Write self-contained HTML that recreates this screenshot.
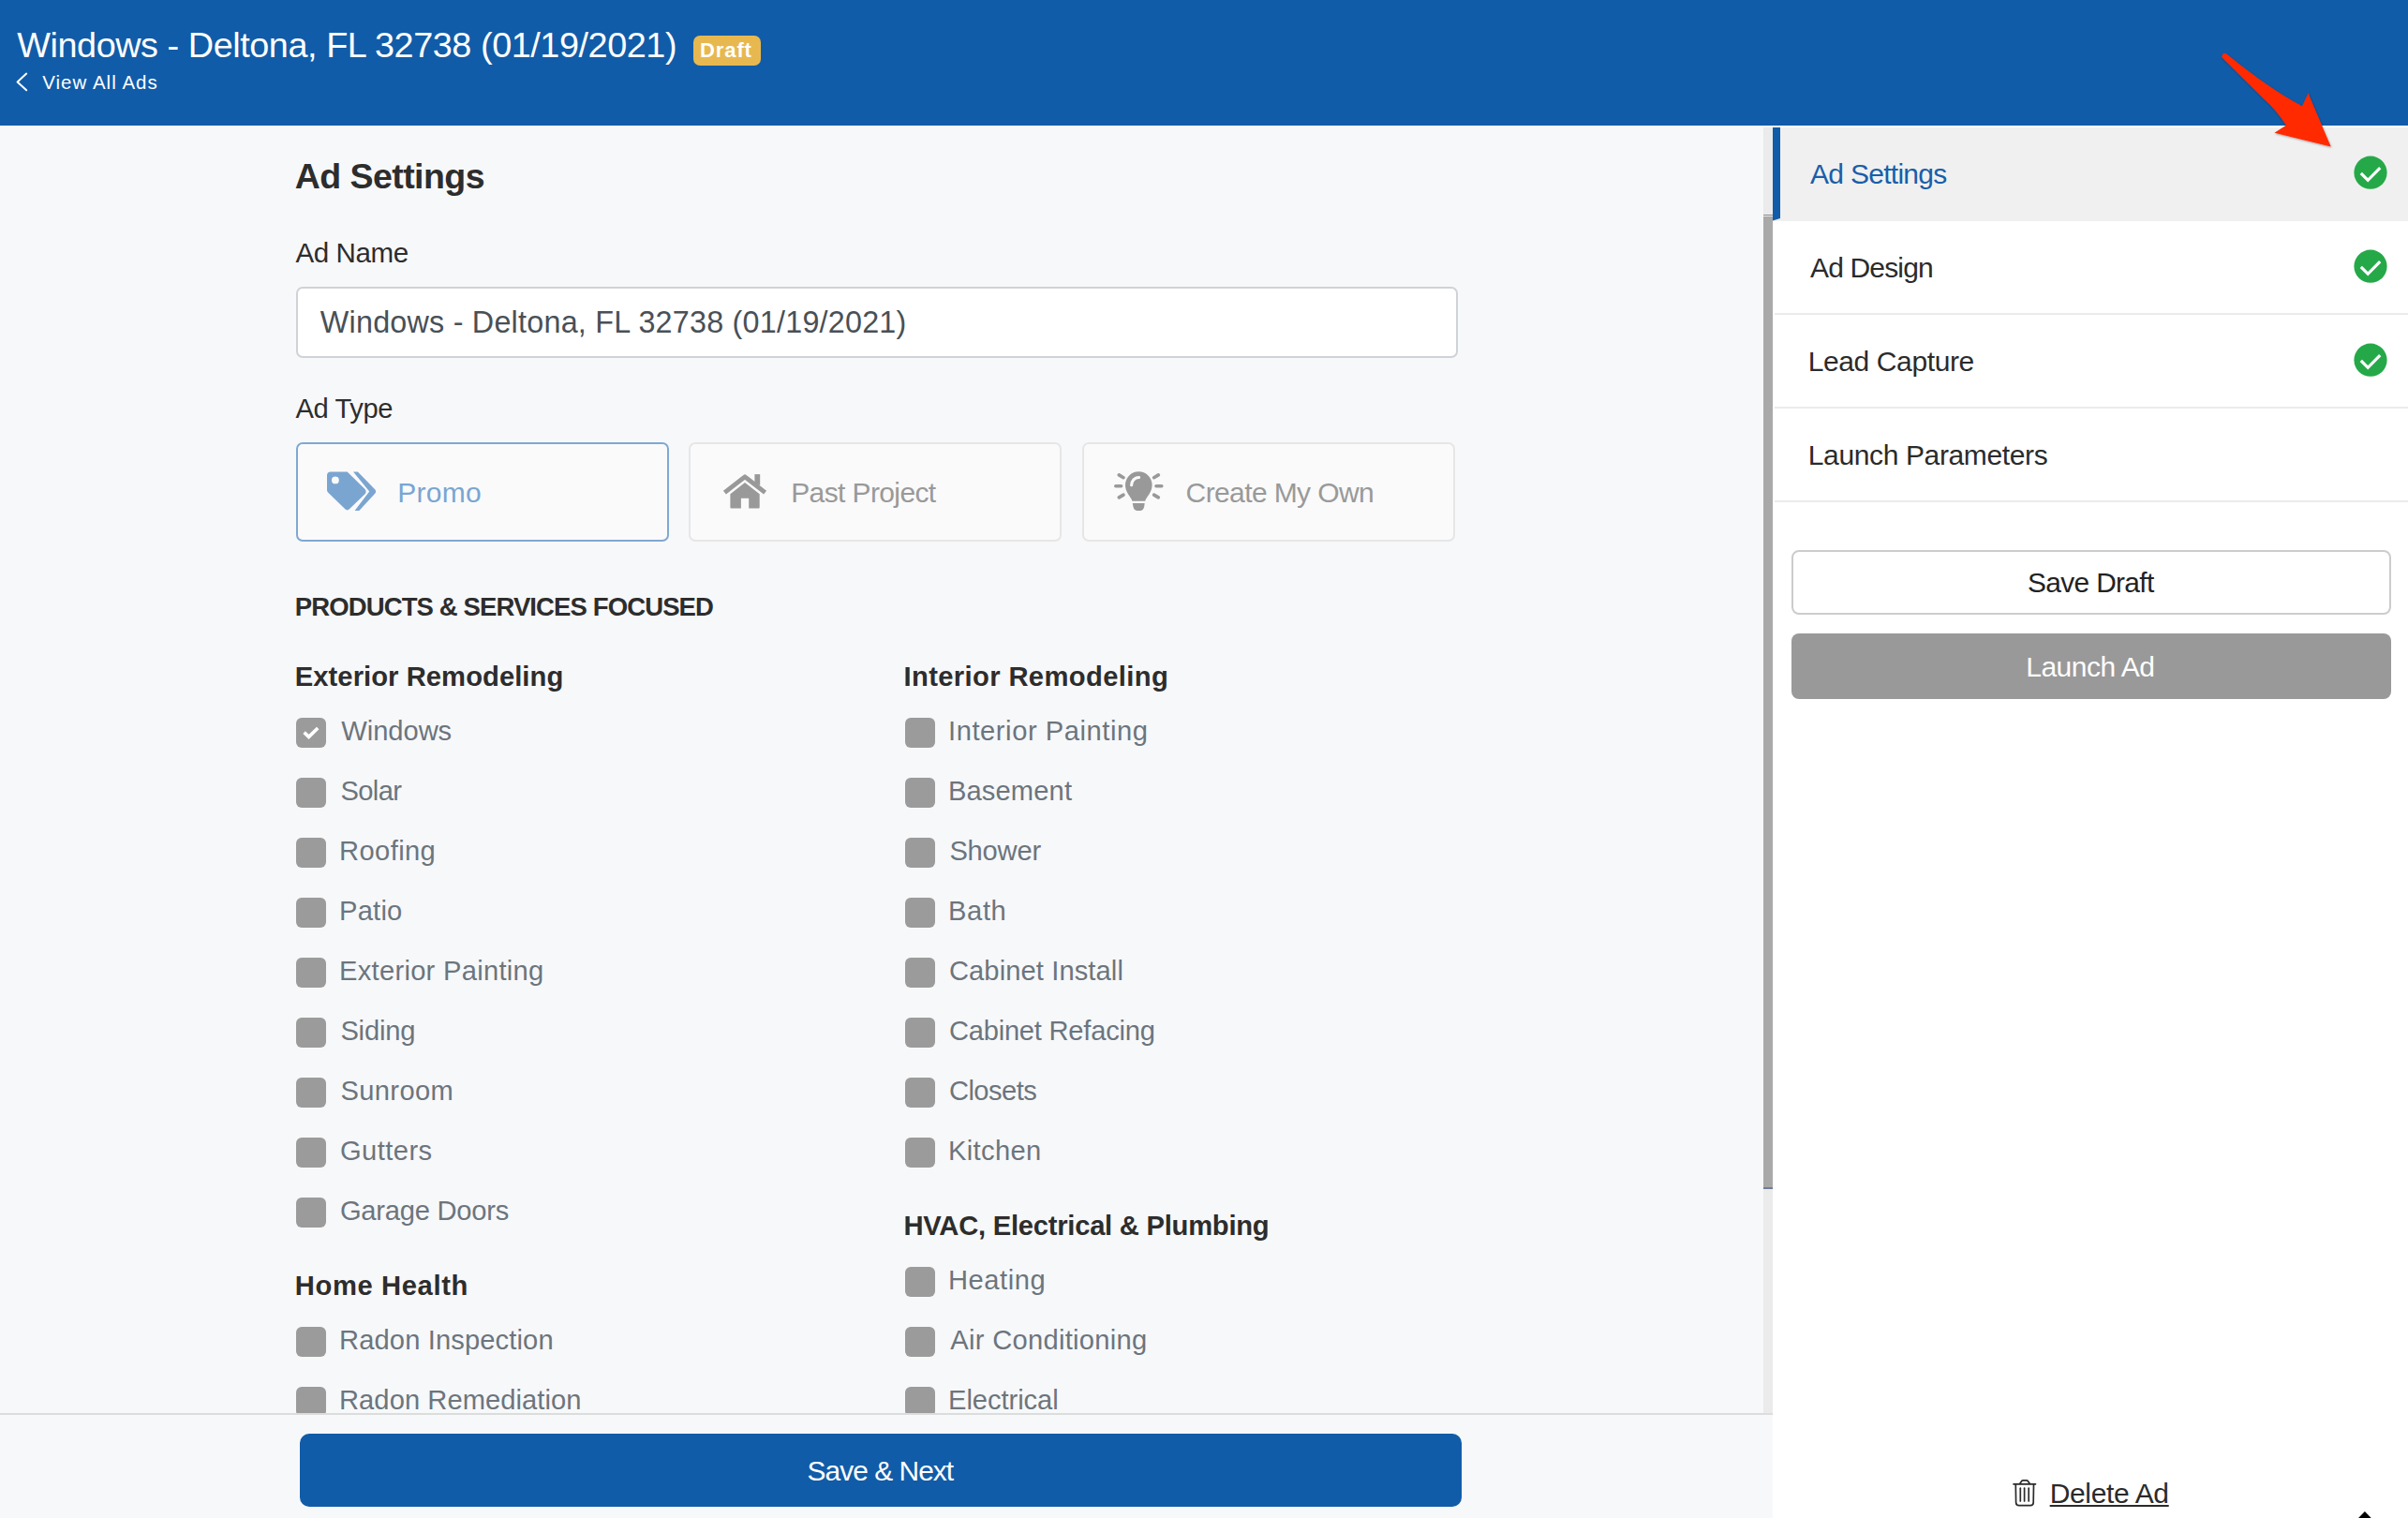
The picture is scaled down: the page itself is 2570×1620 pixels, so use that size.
<!DOCTYPE html>
<html><head><meta charset="utf-8"><title>Ad Settings</title>
<style>
html,body{margin:0;padding:0;}
body{width:2570px;height:1620px;overflow:hidden;background:#f7f8fa;font-family:"Liberation Sans",sans-serif;position:relative;}
.t{position:absolute;white-space:nowrap;font-family:"Liberation Sans",sans-serif;}
.a{position:absolute;box-sizing:border-box;}
.cb{position:absolute;width:32px;height:32px;border-radius:6px;background:#9b9b9b;}
svg{position:absolute;left:0;top:0;}
</style></head><body>
<!-- header -->
<div class="a" style="left:0;top:0;width:2570px;height:134px;background:#115ca8"></div>
<div class="a" style="left:740px;top:38px;width:72px;height:32px;border-radius:7px;background:#e8b850"></div>

<!-- main content -->
<div class="a" style="left:316px;top:306px;width:1240px;height:76px;border:2px solid #cfd3d8;border-radius:7px;background:#fff"></div>
<div class="a" style="left:316px;top:472px;width:398px;height:106px;border:2px solid #80a8d2;border-radius:7px;background:#fafafb"></div>
<div class="a" style="left:735px;top:472px;width:398px;height:106px;border:2px solid #e6e6e6;border-radius:7px;background:#fafafa"></div>
<div class="a" style="left:1155px;top:472px;width:398px;height:106px;border:2px solid #e6e6e6;border-radius:7px;background:#fafafa"></div>
<div class="cb" style="left:316px;top:766px"></div>
<div class="cb" style="left:316px;top:830px"></div>
<div class="cb" style="left:316px;top:894px"></div>
<div class="cb" style="left:316px;top:958px"></div>
<div class="cb" style="left:316px;top:1022px"></div>
<div class="cb" style="left:316px;top:1086px"></div>
<div class="cb" style="left:316px;top:1150px"></div>
<div class="cb" style="left:316px;top:1214px"></div>
<div class="cb" style="left:316px;top:1278px"></div>
<div class="cb" style="left:316px;top:1416px"></div>
<div class="cb" style="left:316px;top:1480px"></div>
<div class="cb" style="left:966px;top:766px"></div>
<div class="cb" style="left:966px;top:830px"></div>
<div class="cb" style="left:966px;top:894px"></div>
<div class="cb" style="left:966px;top:958px"></div>
<div class="cb" style="left:966px;top:1022px"></div>
<div class="cb" style="left:966px;top:1086px"></div>
<div class="cb" style="left:966px;top:1150px"></div>
<div class="cb" style="left:966px;top:1214px"></div>
<div class="cb" style="left:966px;top:1352px"></div>
<div class="cb" style="left:966px;top:1416px"></div>
<div class="cb" style="left:966px;top:1480px"></div>

<!-- scrollbar -->
<div class="a" style="left:1882px;top:136px;width:10px;height:1372px;background:#ebebeb"></div>
<div class="a" style="left:1882px;top:228.5px;width:10px;height:1.5px;background:#8a8a8a"></div>
<div class="a" style="left:1882px;top:230.5px;width:10px;height:1037px;background:#a9a9a9"></div>
<div class="a" style="left:1882px;top:1267px;width:10px;height:1.5px;background:#6f7f95"></div>

<!-- sidebar -->
<div class="a" style="left:1892px;top:134px;width:678px;height:1486px;background:#fff"></div>
<div class="a" style="left:1892px;top:136px;width:678px;height:99.5px;background:#f0f0f0"></div>
<div class="a" style="left:1892px;top:136px;width:8px;height:99.5px;background:#115ca8;clip-path:polygon(0 0,100% 0,100% 97.5%,0 100%)"></div>
<div class="a" style="left:1894px;top:334px;width:676px;height:2px;background:#ebebeb"></div>
<div class="a" style="left:1894px;top:434px;width:676px;height:2px;background:#ebebeb"></div>
<div class="a" style="left:1894px;top:534px;width:676px;height:2px;background:#ebebeb"></div>
<div class="a" style="left:1912px;top:587px;width:640px;height:68.5px;border:2px solid #cccccc;border-radius:8px;background:#fff"></div>
<div class="a" style="left:1912px;top:676px;width:640px;height:70px;border-radius:8px;background:#999999"></div>

<div class="t" style="left:18.30px;top:30.07px;font-size:37.80px;line-height:37.80px;letter-spacing:-0.440px;color:#fff;">Windows - Deltona, FL 32738 (01/19/2021)</div>
<div class="t" style="left:747.12px;top:43.30px;font-size:22.00px;line-height:22.00px;letter-spacing:0.861px;color:#fff;font-weight:700;">Draft</div>
<div class="t" style="left:45.20px;top:78.43px;font-size:20.43px;line-height:20.43px;letter-spacing:1.058px;color:#fff;">View All Ads</div>
<div class="t" style="left:314.81px;top:169.93px;font-size:37.50px;line-height:37.50px;letter-spacing:-0.563px;color:#2d2d2d;font-weight:700;">Ad Settings</div>
<div class="t" style="left:315.40px;top:254.87px;font-size:29.57px;line-height:29.57px;letter-spacing:-0.407px;color:#2d2d2d;">Ad Name</div>
<div class="t" style="left:341.80px;top:328.03px;font-size:32.32px;line-height:32.32px;letter-spacing:0.227px;color:#495057;">Windows - Deltona, FL 32738 (01/19/2021)</div>
<div class="t" style="left:315.40px;top:421.64px;font-size:29.13px;line-height:29.13px;letter-spacing:-0.366px;color:#2d2d2d;">Ad Type</div>
<div class="t" style="left:424.26px;top:510.70px;font-size:30.00px;line-height:30.00px;letter-spacing:0.275px;color:#7ba5d1;">Promo</div>
<div class="t" style="left:844.16px;top:510.70px;font-size:30.00px;line-height:30.00px;letter-spacing:-0.608px;color:#999999;">Past Project</div>
<div class="t" style="left:1265.59px;top:510.70px;font-size:30.00px;line-height:30.00px;letter-spacing:-0.608px;color:#999999;">Create My Own</div>
<div class="t" style="left:314.78px;top:634.33px;font-size:27.50px;line-height:27.50px;letter-spacing:-0.883px;color:#2d2d2d;font-weight:700;">PRODUCTS &amp; SERVICES FOCUSED</div>
<div class="t" style="left:314.78px;top:708.08px;font-size:29.20px;line-height:29.20px;letter-spacing:0.057px;color:#2d2d2d;font-weight:700;">Exterior Remodeling</div>
<div class="t" style="left:364.30px;top:765.64px;font-size:29.13px;line-height:29.13px;letter-spacing:-0.044px;color:#6c757d;">Windows</div>
<div class="t" style="left:363.39px;top:829.64px;font-size:29.13px;line-height:29.13px;letter-spacing:-0.613px;color:#6c757d;">Solar</div>
<div class="t" style="left:362.02px;top:893.64px;font-size:29.13px;line-height:29.13px;letter-spacing:0.401px;color:#6c757d;">Roofing</div>
<div class="t" style="left:362.02px;top:957.64px;font-size:29.13px;line-height:29.13px;letter-spacing:0.215px;color:#6c757d;">Patio</div>
<div class="t" style="left:362.02px;top:1021.64px;font-size:29.13px;line-height:29.13px;letter-spacing:0.280px;color:#6c757d;">Exterior Painting</div>
<div class="t" style="left:363.39px;top:1085.64px;font-size:29.13px;line-height:29.13px;letter-spacing:-0.186px;color:#6c757d;">Siding</div>
<div class="t" style="left:363.39px;top:1149.64px;font-size:29.13px;line-height:29.13px;letter-spacing:0.370px;color:#6c757d;">Sunroom</div>
<div class="t" style="left:362.93px;top:1213.64px;font-size:29.13px;line-height:29.13px;letter-spacing:0.444px;color:#6c757d;">Gutters</div>
<div class="t" style="left:362.93px;top:1277.64px;font-size:29.13px;line-height:29.13px;letter-spacing:-0.235px;color:#6c757d;">Garage Doors</div>
<div class="t" style="left:314.78px;top:1358.48px;font-size:29.20px;line-height:29.20px;letter-spacing:0.616px;color:#2d2d2d;font-weight:700;">Home Health</div>
<div class="t" style="left:362.02px;top:1415.64px;font-size:29.13px;line-height:29.13px;letter-spacing:0.126px;color:#6c757d;">Radon Inspection</div>
<div class="t" style="left:362.02px;top:1479.64px;font-size:29.13px;line-height:29.13px;letter-spacing:0.064px;color:#6c757d;">Radon Remediation</div>
<div class="t" style="left:964.47px;top:708.08px;font-size:29.20px;line-height:29.20px;letter-spacing:0.366px;color:#2d2d2d;font-weight:700;">Interior Remodeling</div>
<div class="t" style="left:1012.02px;top:765.64px;font-size:29.13px;line-height:29.13px;letter-spacing:0.562px;color:#6c757d;">Interior Painting</div>
<div class="t" style="left:1012.02px;top:829.64px;font-size:29.13px;line-height:29.13px;letter-spacing:0.117px;color:#6c757d;">Basement</div>
<div class="t" style="left:1013.39px;top:893.64px;font-size:29.13px;line-height:29.13px;letter-spacing:-0.204px;color:#6c757d;">Shower</div>
<div class="t" style="left:1012.02px;top:957.64px;font-size:29.13px;line-height:29.13px;letter-spacing:0.629px;color:#6c757d;">Bath</div>
<div class="t" style="left:1012.93px;top:1021.64px;font-size:29.13px;line-height:29.13px;letter-spacing:0.099px;color:#6c757d;">Cabinet Install</div>
<div class="t" style="left:1012.93px;top:1085.64px;font-size:29.13px;line-height:29.13px;letter-spacing:-0.231px;color:#6c757d;">Cabinet Refacing</div>
<div class="t" style="left:1012.93px;top:1149.64px;font-size:29.13px;line-height:29.13px;letter-spacing:-0.526px;color:#6c757d;">Closets</div>
<div class="t" style="left:1012.02px;top:1213.64px;font-size:29.13px;line-height:29.13px;letter-spacing:0.341px;color:#6c757d;">Kitchen</div>
<div class="t" style="left:964.47px;top:1294.48px;font-size:29.20px;line-height:29.20px;letter-spacing:-0.253px;color:#2d2d2d;font-weight:700;">HVAC, Electrical &amp; Plumbing</div>
<div class="t" style="left:1012.02px;top:1351.64px;font-size:29.13px;line-height:29.13px;letter-spacing:0.534px;color:#6c757d;">Heating</div>
<div class="t" style="left:1014.30px;top:1415.64px;font-size:29.13px;line-height:29.13px;letter-spacing:0.286px;color:#6c757d;">Air Conditioning</div>
<div class="t" style="left:1012.02px;top:1479.64px;font-size:29.13px;line-height:29.13px;letter-spacing:-0.053px;color:#6c757d;">Electrical</div>
<div class="t" style="left:1932.10px;top:170.60px;font-size:30.00px;line-height:30.00px;letter-spacing:-0.729px;color:#1a5ea9;">Ad Settings</div>
<div class="t" style="left:1932.10px;top:270.60px;font-size:30.00px;line-height:30.00px;letter-spacing:-0.854px;color:#2b2b2b;">Ad Design</div>
<div class="t" style="left:1929.76px;top:370.60px;font-size:30.00px;line-height:30.00px;letter-spacing:-0.395px;color:#2b2b2b;">Lead Capture</div>
<div class="t" style="left:1929.76px;top:470.60px;font-size:30.00px;line-height:30.00px;letter-spacing:-0.364px;color:#2b2b2b;">Launch Parameters</div>
<div class="t" style="left:2164.07px;top:606.62px;font-size:29.86px;line-height:29.86px;letter-spacing:-0.656px;color:#222;">Save Draft</div>
<div class="t" style="left:2162.26px;top:696.50px;font-size:30.00px;line-height:30.00px;letter-spacing:-0.503px;color:#fff;">Launch Ad</div>
<div class="t" style="left:2187.66px;top:1579.00px;font-size:30.00px;line-height:30.00px;letter-spacing:-0.340px;color:#2b2b2b;text-decoration:underline;text-underline-offset:2px;text-decoration-thickness:1.6px;">Delete Ad</div>

<!-- footer overlay -->
<div class="a" style="left:0;top:1508px;width:1892px;height:112px;background:#f7f8fa;border-top:2px solid #dcdcdc"></div>
<div class="a" style="left:320px;top:1530px;width:1240px;height:77.5px;border-radius:10px;background:#115ca8"></div>
<div class="t" style="left:861.47px;top:1554.52px;font-size:29.86px;line-height:29.86px;letter-spacing:-0.931px;color:#fff;">Save &amp; Next</div>

<svg width="2570" height="1620" viewBox="0 0 2570 1620">
  <!-- header chevron -->
  <polyline points="28.2,78.6 18.6,87.5 28.2,96.3" fill="none" stroke="#fff" stroke-width="2" stroke-linecap="round" stroke-linejoin="round"/>
  <!-- tag icon -->
  <path fill="#7ba5d1" fill-rule="evenodd" d="M349,507.4 Q349,503.4 353,503.4 L370.6,503.4 L389.8,522.3 Q391.4,524.6 389.8,526.9 L372.6,543.6 Q370.6,545.2 368.6,543.6 L350.3,525.8 Q349,524.6 349,523 Z M361.8,512.4 A3.9,3.9 0 1 0 354,512.4 A3.9,3.9 0 1 0 361.8,512.4 Z"/>
  <path fill="#7ba5d1" d="M377,503.4 L381.8,503.4 L400.4,522.6 Q401.8,524.6 400.4,526.6 L383.3,544.9 L378.6,544.9 L394.2,524.6 Z"/>
  <!-- house icon -->
  <polyline points="773.4,525.6 795,508.8 816.6,525.6" fill="none" stroke="#999999" stroke-width="4.8" stroke-linejoin="round"/>
  <rect x="805.4" y="506.1" width="5.8" height="11.6" fill="#999999"/>
  <path fill="#999999" d="M779.4,527.3 L795,515.1 L810.7,527.3 L810.7,541.6 Q810.7,542.6 809.7,542.6 L799.2,542.6 L799.2,531.7 L790.9,531.7 L790.9,542.6 L780.4,542.6 Q779.4,542.6 779.4,541.6 Z"/>
  <!-- lightbulb -->
  <g fill="#999999">
    <path d="M1208.4,534.7 C1207,530 1201,526 1201,517.6 A14.3,14.3 0 0 1 1229.6,517.6 C1229.6,526 1223.6,530 1222.2,534.7 Z"/>
    <path d="M1208.8,537 L1221.7,537 L1221.2,540.5 Q1220.2,544.9 1217.5,544.9 L1213.2,544.9 Q1210.4,544.9 1209.4,540.5 Z"/>
  </g>
  <path d="M1207.6,517.8 Q1208.2,510.2 1215.6,509.6" fill="none" stroke="#fafafa" stroke-width="3" stroke-linecap="round"/>
  <g stroke="#999999" stroke-width="3.6" stroke-linecap="round" fill="none">
    <line x1="1190.8" y1="518.8" x2="1196.6" y2="518.8"/>
    <line x1="1194.3" y1="506.9" x2="1199" y2="509.7"/>
    <line x1="1194.3" y1="530.9" x2="1199" y2="528.1"/>
    <line x1="1234" y1="518.8" x2="1239.8" y2="518.8"/>
    <line x1="1231.6" y1="509.7" x2="1236.3" y2="506.9"/>
    <line x1="1231.6" y1="528.1" x2="1236.3" y2="530.9"/>
  </g>
  <!-- checked checkbox mark -->
  <polyline points="324.6,781.6 329.6,786.4 339.2,777" fill="none" stroke="#fff" stroke-width="3.6"/>
  <!-- green checks -->
  <g>
    <circle cx="2530" cy="184.2" r="17.6" fill="#25a948"/>
    <polyline points="2519.8,184.9 2527.2,192.3 2540.2,179.2" fill="none" stroke="#fff" stroke-width="3.2"/>
    <circle cx="2530" cy="284.2" r="17.6" fill="#25a948"/>
    <polyline points="2519.8,284.9 2527.2,292.3 2540.2,279.2" fill="none" stroke="#fff" stroke-width="3.2"/>
    <circle cx="2530" cy="384.2" r="17.6" fill="#25a948"/>
    <polyline points="2519.8,384.9 2527.2,392.3 2540.2,379.2" fill="none" stroke="#fff" stroke-width="3.2"/>
  </g>
  <!-- trash icon -->
  <g fill="none" stroke="#2b2b2b" stroke-width="1.7" stroke-linecap="round" stroke-linejoin="round">
    <line x1="2149" y1="1583.8" x2="2172.5" y2="1583.8"/>
    <path d="M2155.8,1583.3 L2157.8,1580.4 Q2158.3,1579.9 2159,1579.9 L2163,1579.9 Q2163.7,1579.9 2164.2,1580.4 L2166.2,1583.3"/>
    <path d="M2151.3,1584.4 L2151.6,1603.6 Q2151.8,1606.6 2154.8,1606.6 L2167,1606.6 Q2170,1606.6 2170.2,1603.6 L2170.5,1584.4"/>
    <line x1="2156.3" y1="1588.2" x2="2156.3" y2="1602"/>
    <line x1="2160.6" y1="1588.2" x2="2160.6" y2="1602"/>
    <line x1="2165.2" y1="1588.2" x2="2165.2" y2="1602"/>
  </g>
  <!-- black triangle bottom right -->
  <polygon points="2523.9,1613 2516.6,1620.5 2531.2,1620.5" fill="#000"/>
  <!-- red arrow -->
  <defs><filter id="sh" x="-20%" y="-20%" width="140%" height="140%"><feDropShadow dx="0.6" dy="1" stdDeviation="0.8" flood-color="#000" flood-opacity="0.35"/></filter></defs>
  <path filter="url(#sh)" fill="#ff2a00" d="M2376.4,57.6 Q2422.4,95.3 2457,113.3 L2463.5,99.6 L2487.7,156.4 L2427.5,141.7 L2440,133.7 Q2429,117 2416,105.5 L2372.6,62.5 A2.75,2.75 0 0 1 2376.4,57.6 Z"/>
</svg>
</body></html>
